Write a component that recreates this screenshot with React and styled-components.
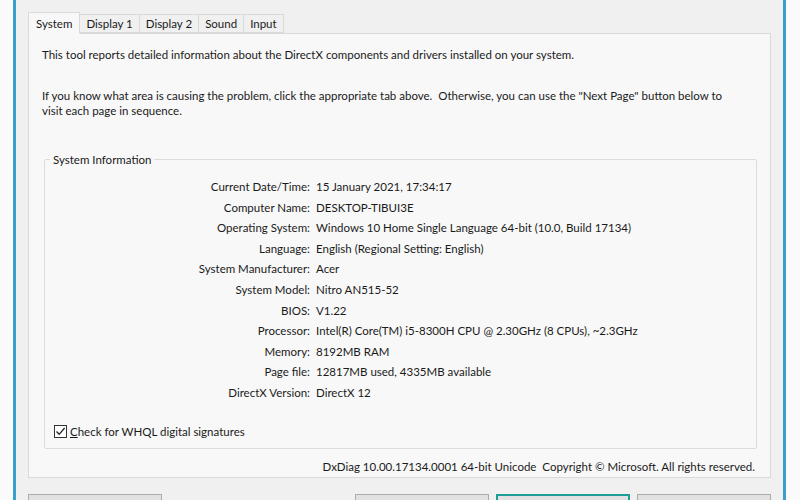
import styled, { createGlobalStyle } from 'styled-components'

const GlobalStyle = createGlobalStyle`
  body {
    margin: 0;
    background: #fafafa;
    font-family: Lato, "Noto Sans", "Liberation Sans", sans-serif;
    font-size: 11.5px;
    color: #1a1a1a;
  }
`

const Screen = styled.div`
  width: 800px;
  height: 500px;
  overflow: hidden;
  display: flex;
  background: #fafafa;
`

const Window = styled.div`
  margin-left: 13px;
  width: 773px;
  height: 540px;
  box-sizing: border-box;
  flex-shrink: 0;
  border-left: 3px solid #3a9fcf;
  border-right: 3px solid #3a9fcf;
  background: #f0f0f0;
  padding: 11px 12px 0 12px;
  display: flex;
  flex-direction: column;
`

const TabBar = styled.div`
  display: flex;
  align-items: flex-end;
  height: 22px;
  position: relative;
  z-index: 1;
`

const Tab = styled.div`
  height: ${p => (p.active ? '22px' : '19px')};
  margin-left: -1px;
  padding: 0 ${p => (p.active ? '7px' : '6px')};
  border: 1px solid #d9d9d9;
  border-bottom: ${p => (p.active ? '1px solid #f8f8f8' : '1px solid #d9d9d9')};
  background: ${p => (p.active ? '#f8f8f8' : '#f0f0f0')};
  display: flex;
  align-items: center;
  box-sizing: border-box;
  margin-bottom: ${p => (p.active ? '-1px' : '0')};
  &:first-child {
    margin-left: 0;
  }
`

const Panel = styled.div`
  height: 445px;
  box-sizing: border-box;
  border: 1px solid #d9d9d9;
  background: #f8f8f8;
  padding: 13px 13px 0 13px;
  display: flex;
  flex-direction: column;
`

const Para = styled.p`
  margin: 0 0 ${p => p.gap || 0}px 0;
  max-width: 700px;
  line-height: 15px;
`

const Group = styled.fieldset`
  margin: 34px 0 0 2px;
  padding: 0 0 9px 0;
  border: 1px solid #dcdcdc;
  border-radius: 2px;
`

const Legend = styled.legend`
  margin-left: 5px;
  padding: 0 3px;
  line-height: 15px;
`

const InfoGrid = styled.div`
  display: grid;
  grid-template-columns: 265px 1fr;
  column-gap: 6px;
  margin-top: 10px;
  line-height: 20.6px;
`

const Label = styled.div`
  text-align: right;
`

const Value = styled.div``

const CheckRow = styled.label`
  display: flex;
  align-items: center;
  gap: 3px;
  margin: 20px 0 0 9px;
  line-height: 15px;
`

const Box = styled.span`
  width: 13px;
  height: 13px;
  box-sizing: border-box;
  border: 1px solid #333;
  background: #fff;
  display: flex;
  align-items: center;
  justify-content: center;
`

const Footer = styled.div`
  text-align: right;
  margin-top: 10px;
  padding-right: 2px;
  line-height: 15px;
`

const ButtonRow = styled.div`
  display: flex;
  gap: 7px;
  margin-top: 16px;
`

const Button = styled.div`
  width: 134px;
  height: 23px;
  box-sizing: border-box;
  border: ${p => (p.focused ? '2px solid #1f9e95' : '1px solid #adadad')};
  background: #e1e1e1;
  display: flex;
  align-items: center;
  justify-content: center;
  margin-left: ${p => (p.push ? 'auto' : '0')};
`

const rows = [
  ['Current Date/Time:', '15 January 2021, 17:34:17'],
  ['Computer Name:', 'DESKTOP-TIBUI3E'],
  ['Operating System:', 'Windows 10 Home Single Language 64-bit (10.0, Build 17134)'],
  ['Language:', 'English (Regional Setting: English)'],
  ['System Manufacturer:', 'Acer'],
  ['System Model:', 'Nitro AN515-52'],
  ['BIOS:', 'V1.22'],
  ['Processor:', 'Intel(R) Core(TM) i5-8300H CPU @ 2.30GHz (8 CPUs), ~2.3GHz'],
  ['Memory:', '8192MB RAM'],
  ['Page file:', '12817MB used, 4335MB available'],
  ['DirectX Version:', 'DirectX 12'],
]

const tabs = ['System', 'Display 1', 'Display 2', 'Sound', 'Input']

export default function App() {
  return (
    <Screen>
      <GlobalStyle />
      <Window>
        <TabBar>
          {tabs.map((t, i) => (
            <Tab key={t} active={i === 0}>
              {t}
            </Tab>
          ))}
        </TabBar>
        <Panel>
          <Para gap={26}>
            This tool reports detailed information about the DirectX components and drivers
            installed on your system.
          </Para>
          <Para>
            If you know what area is causing the problem, click the appropriate tab above.&nbsp;
            Otherwise, you can use the "Next Page" button below to visit each page in sequence.
          </Para>
          <Group>
            <Legend>System Information</Legend>
            <InfoGrid>
              {rows.map(([k, v]) => (
                <>
                  <Label key={k}>{k}</Label>
                  <Value key={k + 'v'}>{v}</Value>
                </>
              ))}
            </InfoGrid>
            <CheckRow>
              <Box>
                <svg width="11" height="11" viewBox="0 0 11 11">
                  <path d="M1.5 5.5 L4.2 8.3 L9.6 2" fill="none" stroke="#222" strokeWidth="1.3" />
                </svg>
              </Box>
              <span>
                <u>C</u>heck for WHQL digital signatures
              </span>
            </CheckRow>
          </Group>
          <Footer>
            DxDiag 10.00.17134.0001 64-bit Unicode&nbsp; Copyright © Microsoft. All rights reserved.
          </Footer>
        </Panel>
        <ButtonRow>
          <Button>Help</Button>
          <Button push>Next Page</Button>
          <Button focused>Save All Information...</Button>
          <Button>Exit</Button>
        </ButtonRow>
      </Window>
    </Screen>
  )
}
